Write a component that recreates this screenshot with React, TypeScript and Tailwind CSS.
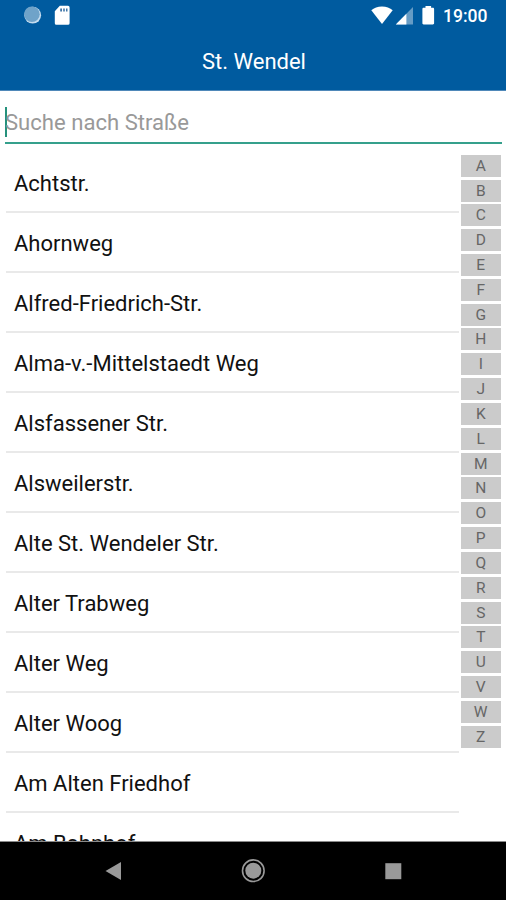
import React from "react";

const streets = [
  "Achtstr.",
  "Ahornweg",
  "Alfred-Friedrich-Str.",
  "Alma-v.-Mittelstaedt Weg",
  "Alsfassener Str.",
  "Alsweilerstr.",
  "Alte St. Wendeler Str.",
  "Alter Trabweg",
  "Alter Weg",
  "Alter Woog",
  "Am Alten Friedhof",
  "Am Bahnhof",
];

const letters = "ABCDEFGHIJKLMNOPQRSTUVWZ".split("");

const StatusBar: React.FC = () => (
  <div className="flex h-8 items-center justify-between pl-6 pr-[18px] text-white">
    <svg width="50" height="32" viewBox="0 0 50 32">
      <circle cx="8.7" cy="15.2" r="8.4" fill="#c4dcef" />
      <circle cx="7.9" cy="14.2" r="7.8" fill="#6fa3c9" />
      <path
        d="M35.8 5.8H44a1.6 1.6 0 0 1 1.6 1.6v15.8a1.6 1.6 0 0 1-1.6 1.6H32.4a1.6 1.6 0 0 1-1.6-1.6V11.2z"
        fill="#fff"
      />
      <path d="M36.2 8.4h1.8v3.2h-1.8zM39.2 8.4h1.6v3.2h-1.6zM42 8.4h1.5v3.2H42z" fill="#3f76a8" />
    </svg>
    <div className="flex items-center">
      <svg width="72" height="32" viewBox="0 0 72 32" fill="#fff">
        <path d="M11 24 .3 10.3C3 8 6.7 6.4 11 6.4s8 1.6 10.7 3.9z" />
        <path d="M42 7v17.5H24.8z" fillOpacity=".4" />
        <path d="M35.4 13.8v10.7H24.8z" />
        <path d="M54.5 6h5.6v1.8h1.8c.7 0 1.2.5 1.2 1.2v14.3c0 .7-.5 1.2-1.2 1.2h-9.3c-.7 0-1.2-.5-1.2-1.2V9c0-.7.5-1.2 1.2-1.2h1.9z" />
      </svg>
      <span className="w-[45px] whitespace-nowrap text-[17.5px] font-medium leading-8">19:00</span>
    </div>
  </div>
);

const SearchField: React.FC = () => (
  <div className="ml-[5px] mr-1 flex h-[53px] shrink-0 items-center border-b-2 border-[#35a08c] pt-2.5">
    <span className="h-[30px] w-0.5 bg-[#25917c]" />
    <span className="-ml-0.5 text-[22.1px] leading-[30px] text-[#999]">Suche nach Straße</span>
  </div>
);

const LetterIndex: React.FC = () => (
  <div className="flex w-[39.5px] shrink-0 flex-col gap-[2.83px] pt-[10.7px]">
    {letters.map((letter) => (
      <div
        key={letter}
        className="flex h-[22px] shrink-0 items-center justify-center bg-[#cbcbcb] pt-[1.5px] text-[15.5px] leading-none text-[#666]"
      >
        {letter}
      </div>
    ))}
  </div>
);

const NavigationBar: React.FC = () => (
  <div className="flex h-[59px] shrink-0 items-center justify-center border-t border-[#8a8a8a] bg-black">
    <svg width="506" height="58" viewBox="0 0 506 58" fill="#999">
      <path d="M105.5 29 121 20v18z" />
      <circle cx="253.3" cy="28.7" r="10.8" fill="none" stroke="#999" strokeWidth="1.6" />
      <circle cx="253.3" cy="28.7" r="8" />
      <path d="M385.3 21.2h16v16h-16z" />
    </svg>
  </div>
);

const App: React.FC = () => {
  return (
    <div className="flex h-[900px] w-[506px] flex-col overflow-hidden bg-white font-['Roboto',sans-serif]">
      <header className="h-[91px] shrink-0 border-b border-[#4f88b9] bg-[#005b9f]">
        <StatusBar />
        <h1 className="pl-0.5 pt-[14px] text-center text-[22px] leading-8 text-white">St. Wendel</h1>
      </header>
      <SearchField />
      <main className="flex min-h-0 flex-1 overflow-hidden pl-1.5 pr-[5.5px]">
        <ul className="flex-1 pt-[9px]">
          {streets.map((street) => (
            <li
              key={street}
              className="h-[60px] border-b-2 border-[#e9e9e9] pl-2 pt-px text-[22px] leading-[60px] text-[#111]"
            >
              {street}
            </li>
          ))}
        </ul>
        <div className="w-0.5 shrink-0" />
        <LetterIndex />
      </main>
      <NavigationBar />
    </div>
  );
};

export default App;
